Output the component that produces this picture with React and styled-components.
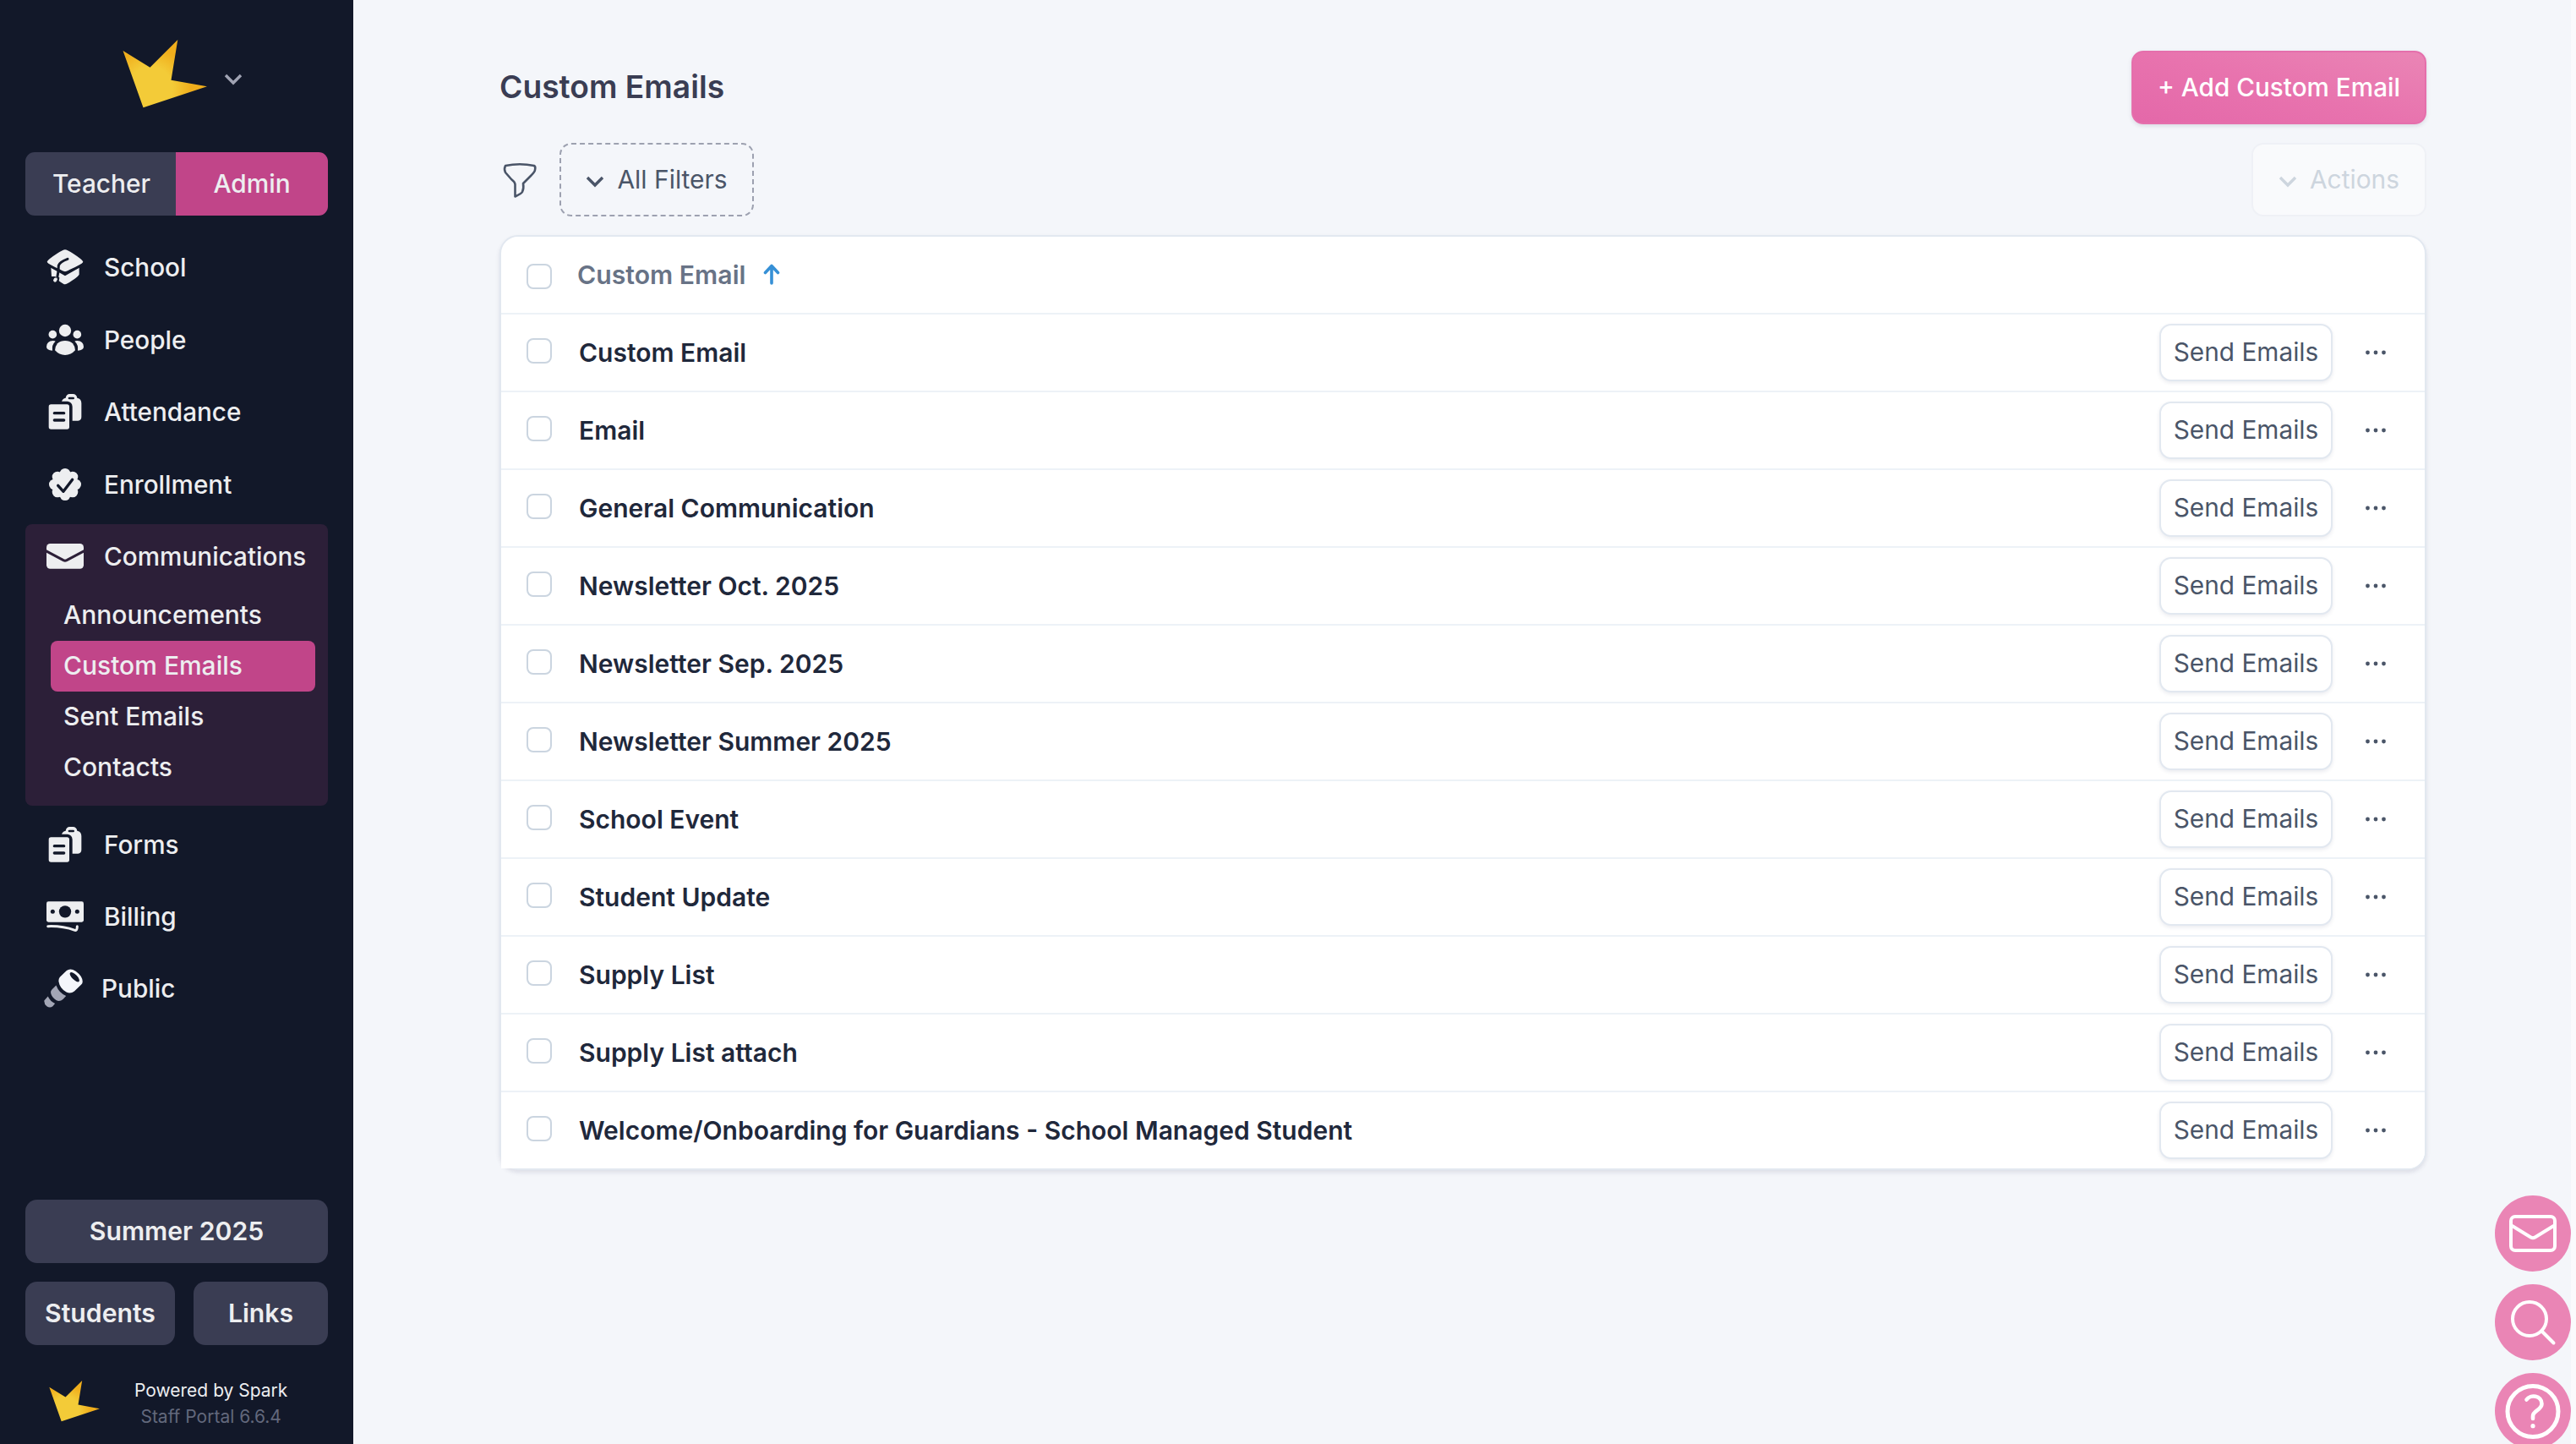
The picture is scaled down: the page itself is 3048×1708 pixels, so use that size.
import React from 'react';
import styled, { createGlobalStyle } from 'styled-components';

const colors = {
  sidebar: '#121829',
  slate: '#3a3d53',
  pink: '#c14589',
  group: '#2c1f38',
  light: '#edeef0',
  page: '#f4f6fa',
  border: '#e2e8f0',
  text: '#4a5568',
};

const GlobalStyle = createGlobalStyle`
  body {
    margin: 0;
    overflow: hidden;
    background: ${colors.page};
    font-family: Inter, sans-serif;
    font-size: 30px;
  }

  *, *::before, *::after {
    box-sizing: border-box;
  }

  button {
    font-family: inherit;
    font-size: inherit;
    padding: 0;
    border: none;
  }

  svg {
    display: block;
    flex-shrink: 0;
  }
`;

const Page = styled.div`
  display: flex;
  width: 3048px;
  height: 1708px;
`;

const Sidebar = styled.aside`
  display: flex;
  flex-direction: column;
  width: 418px;
  padding: 0 30px;
  background: ${colors.sidebar};
  color: ${colors.light};
`;

const Brand = styled.div`
  display: flex;
  align-items: flex-start;
  gap: 20px;
  height: 180px;
  padding: 47px 0 0 115px;

  svg + svg {
    margin-top: 40px;
  }
`;

const Toggle = styled.div`
  display: flex;
  height: 75px;
  border-radius: 11px;
  overflow: hidden;
`;

const ToggleItem = styled.button`
  width: ${(props) => (props.$active ? 180 : 178)}px;
  padding: ${(props) => (props.$active ? '0 0 2px' : '0 0 2px 2px')};
  background: ${(props) => (props.$active ? colors.pink : colors.slate)};
  color: ${colors.light};
  font-size: 29.8px;
  font-weight: 500;
`;

const Nav = styled.nav`
  margin-top: 18.5px;
  font-size: 29.7px;
`;

const NavItem = styled.a`
  display: flex;
  align-items: center;
  gap: ${(props) => props.$gap || 24}px;
  height: ${(props) => props.$height || 85.5}px;
  padding-left: 25px;
  font-weight: 500;
`;

const Group = styled.div`
  height: 333px;
  margin: 4.5px 0 3px;
  border-radius: 8px;
  background: ${colors.group};
`;

const SubList = styled.div`
  display: flex;
  flex-direction: column;
  padding: 2px 15px 15px 30px;
`;

const SubItem = styled.a`
  height: 60px;
  padding-left: 15px;
  border-radius: 8px;
  line-height: 58px;
  font-size: 30px;
  font-weight: 500;
  background: ${(props) => (props.$active ? colors.pink : 'transparent')};
`;

const PublicLabel = styled.span`
  margin-bottom: 2px;
`;

const Bottom = styled.div`
  display: flex;
  flex-wrap: wrap;
  justify-content: space-between;
  row-gap: 22px;
  margin-top: auto;
`;

const SideButton = styled.button`
  width: ${(props) => props.$width}px;
  height: 75px;
  padding-bottom: 1px;
  border-radius: 14px;
  background: ${colors.slate};
  color: ${colors.light};
  font-size: 30.2px;
  font-weight: 600;
`;

const Powered = styled.div`
  display: flex;
  gap: 41px;
  width: 100%;
  height: 95px;
  padding: 20px 0 0 28px;
`;

const PoweredText = styled.div`
  font-size: 21px;
  line-height: 31px;
  text-align: center;
  margin-top: -4px;
`;

const Version = styled.div`
  color: #62687c;
`;

const Main = styled.main`
  position: relative;
  flex: 1;
  padding: 60px 171px 0 173px;
  border-right: 6px solid #fafafc;
`;

const TitleBar = styled.header`
  display: flex;
  align-items: center;
  justify-content: space-between;
  height: 87px;
`;

const Title = styled.h1`
  margin: 0 0 3px;
  color: ${colors.slate};
  font-size: 37.2px;
  font-weight: 600;
`;

const AddButton = styled.button`
  width: 349px;
  height: 87px;
  padding-bottom: 2px;
  border: 2px solid #e56fac;
  border-radius: 14px;
  background: linear-gradient(15deg, #e468a9, #e873ae 50%, #ea85b5);
  box-shadow: 0 2px 5px rgba(60, 60, 90, 0.14);
  color: #fff;
  font-size: 29.7px;
  font-weight: 500;
`;

const FilterBar = styled.div`
  display: flex;
  align-items: center;
  height: 87px;
  margin: 22px 0;
`;

const DropButton = styled.button`
  display: flex;
  align-items: center;
  justify-content: center;
  gap: 15px;
  width: ${(props) => (props.$disabled ? 207 : 230)}px;
  height: 87px;
  margin-left: ${(props) => (props.$disabled ? 'auto' : '26px')};
  padding-bottom: 2px;
  border: 2px ${(props) => (props.$disabled ? 'solid #eff1f6' : 'dashed #9da1b0')};
  border-radius: 14px;
  background: ${(props) => (props.$disabled ? '#f9fafc' : 'transparent')};
  color: ${(props) => (props.$disabled ? '#cdd5de' : colors.text)};
  font-size: 29.9px;

  svg {
    margin-top: 7px;
  }
`;

const Table = styled.section`
  width: 2280px;
  height: 1106px;
  border: 2px solid ${colors.border};
  border-radius: 22px;
  background: #fff;
  box-shadow: 0 3px 5px rgba(60, 60, 100, 0.12);
`;

const Row = styled.div`
  display: flex;
  align-items: center;
  height: 92px;
  padding: 0 44px 0 30px;
  border-bottom: 2px solid #edf2f7;
  color: #1f283b;
  font-weight: 600;

  &:last-child {
    height: 90px;
    border-bottom: none;
    border-radius: 0 0 20px 0;
    background: #fff;
  }
`;

const HeadRow = styled(Row)`
  color: #687386;
  font-size: 30.2px;

  svg {
    margin-left: 21px;
  }
`;

const Checkbox = styled.span`
  width: 30px;
  height: 30px;
  margin: ${(props) => (props.$head ? '4px 30px 0 0' : '0 32px 4px 0')};
  border: 2px solid #cbd5e0;
  border-radius: 8px;
  background: #fff;
`;

const SendButton = styled.button`
  width: 205px;
  height: 68px;
  margin: 0 37px 0 auto;
  padding-bottom: 2px;
  border: 2px solid ${colors.border};
  border-radius: 14px;
  background: #fff;
  box-shadow: 0 2px 4px rgba(60, 70, 110, 0.1);
  color: ${colors.text};
  font-size: 29.8px;
`;

const FloatingActions = styled.div`
  position: absolute;
  top: 1414px;
  right: 0;
  display: flex;
  flex-direction: column;
  gap: 15px;
`;

const Fab = styled.button`
  width: 90px;
  height: 90px;
  border-radius: 50%;
  background: #ea85b5;
`;

const SparkLogo = ({ size = 100, id }) => (
  <svg width={size} height={size * 0.82} viewBox="0 0 100 82">
    <defs>
      <radialGradient id={id} gradientUnits="userSpaceOnUse" cx="33" cy="58" r="48">
        <stop offset="0.55" stopColor="#f3cb38" />
        <stop offset="1" stopColor="#f0ae1c" />
      </radialGradient>
    </defs>
    <path d="M0.5 13 32.5 32.7 65.3 0 57.5 47.7 100 55.3 24.5 80.3Z" fill={`url(#${id})`} />
  </svg>
);

const Chevron = ({ color = 'currentColor' }) => (
  <svg width="22" height="15" viewBox="0 0 22 15" fill="none" stroke={color} strokeWidth="3.4">
    <path d="m2 2 9 9 9-9" />
  </svg>
);

const NavSvg = ({ children }) => (
  <svg width="44" height="44" viewBox="0 0 132 132" fill={colors.light}>
    {children}
  </svg>
);

const SchoolIcon = () => (
  <NavSvg>
    <path d="M66 4Q73 4 96 19 127 39 130 47 127 54 97 71 72 88 66 88 60 88 35 71 5 54 2 47 5 39 36 19 59 4 66 4Z" />
    <path d="M16 68 66 97 116 68V92Q113 99 90 114 71 127 66 127 61 127 42 113L18 99Z" />
    <g fill="none" stroke={colors.sidebar} strokeLinecap="round">
      <path d="M4 57Q60 86 66 86 72 86 128 57" strokeWidth="9" />
      <path d="M75 37Q47 47 43 60 43 84 38 104" strokeWidth="9" />
      <path d="M40 120 43 104" strokeWidth="6" />
      <path d="M18 102 30 102" strokeWidth="6" />
    </g>
    <path d="M28 104h10l-1 10q-5 8-11 3-4-4 0-9z" />
  </NavSvg>
);

const PeopleIcon = () => (
  <NavSvg>
    <circle cx="66" cy="33" r="21.5" />
    <circle cx="22" cy="47" r="14.5" />
    <circle cx="109" cy="47" r="14.5" />
    <path d="M30 103Q30 90 39 79 50 69 66 69 82 69 93 79 102 90 102 103 87 120 66 120 45 120 30 103Z" />
    <path d="M32 71Q18 83 21 104 0 103 0 90 1 70 23 69 29 69 32 71Z" />
    <path d="M100 71Q114 83 111 104 132 103 132 90 131 70 109 69 103 69 100 71Z" />
  </NavSvg>
);

const PagesIcon = () => (
  <NavSvg>
    <path d="M54 29Q58 18 68 17 71 3 82 3H94Q106 3 109 17 124 20 124 36V84Q124 97 112 98H92V48Q91 31 75 29Z" />
    <rect x="8" y="40" width="73" height="88" rx="8" />
    <rect x="77" y="14" width="22" height="8" rx="4" fill={colors.sidebar} />
    <path d="M28 71h34M28 96h34" stroke={colors.sidebar} strokeWidth="10" strokeLinecap="round" />
  </NavSvg>
);

const BadgeIcon = () => (
  <NavSvg>
    <circle cx="66" cy="66" r="46" />
    {[0, 45, 90, 135, 180, 225, 270, 315].map((angle) => (
      <circle key={angle} cx="66" cy="28" r="19" transform={`rotate(${angle} 66 66)`} />
    ))}
    <path
      d="m41 70 19 21 32-42"
      fill="none"
      stroke={colors.sidebar}
      strokeWidth="10"
      strokeLinecap="round"
      strokeLinejoin="round"
    />
  </NavSvg>
);

const MailIcon = () => (
  <NavSvg>
    <rect y="21" width="132" height="89" rx="13" />
    <path d="M-4 46 60 80Q66 83 72 80L136 46" fill="none" stroke={colors.group} strokeWidth="9" />
  </NavSvg>
);

const BillingIcon = () => (
  <NavSvg>
    <rect y="13" width="132" height="73" rx="7" />
    <g fill={colors.sidebar}>
      <circle cx="66" cy="49" r="21.5" />
      <circle cx="22" cy="49" r="7.5" />
      <circle cx="109" cy="49" r="7.5" />
    </g>
    <path
      d="M5 101Q56 99 101 115 109 117 109 101"
      fill="none"
      stroke={colors.light}
      strokeWidth="9"
      strokeLinecap="round"
    />
  </NavSvg>
);

const FlashlightSvg = styled.svg`
  margin: 0 0 2px -3px;
`;

const FlashlightIcon = () => (
  <FlashlightSvg width="46" height="46" viewBox="-1 -1 137 137">
    <path
      d="M55 28 79 5Q92-5 111 7 134 24 135 42 136 50 130 55L106 78Q93 88 78 81 55 69 51 44 50 34 55 28Z"
      fill="#f4f6fb"
    />
    <ellipse cx="107" cy="28" rx="22" ry="9" fill={colors.sidebar} transform="rotate(45 107 28)" />
    <path d="M42 57Q52 84 77 94L66 106Q54 116 42 109 27 101 23 84 22 77 27 72Z" fill="#a3a6b5" />
    <path d="M13 96Q22 115 38 121L30 131Q20 138 9 131-1 123 0 111Z" fill="#a3a6b5" />
  </FlashlightSvg>
);

const FunnelIcon = () => (
  <svg
    width="45"
    height="44"
    viewBox="0 0 45 44"
    fill="none"
    stroke={colors.text}
    strokeWidth="2.6"
    strokeLinejoin="round"
  >
    <path d="M7 5Q24 1.500 41 5 43 6 42 10 42 12 37 17L28 26Q29 32 27 36 26 38 18.500 41.500V27Q18 24 14 21L7 13Q5 9 7 5Z" />
  </svg>
);

const SortArrow = () => (
  <svg width="20" height="26" viewBox="0 0 20 26" fill="none" stroke="#3690d6" strokeWidth="3.6" strokeLinecap="round">
    <path d="M10 3v20M2.500 10.500 10 2.500l7.500 8" strokeLinejoin="round" />
  </svg>
);

const Dots = () => (
  <svg width="28" height="8" viewBox="0 0 28 8" fill={colors.text}>
    <circle cx="4.500" cy="4" r="2.400" />
    <circle cx="14" cy="4" r="2.400" />
    <circle cx="23.500" cy="4" r="2.400" />
  </svg>
);

const FabSvg = ({ children }) => (
  <svg
    width="90"
    height="90"
    viewBox="0 0 90 90"
    fill="none"
    stroke="#fff"
    strokeWidth="4"
    strokeLinecap="round"
    strokeLinejoin="round"
  >
    {children}
  </svg>
);

const emails = [
  'Custom Email',
  'Email',
  'General Communication',
  'Newsletter Oct. 2025',
  'Newsletter Sep. 2025',
  'Newsletter Summer 2025',
  'School Event',
  'Student Update',
  'Supply List',
  'Supply List attach',
  'Welcome/Onboarding for Guardians - School Managed Student',
];

const App = () => (
  <>
    <GlobalStyle />
    <Page>
      <Sidebar>
        <Brand>
          <SparkLogo id="spark-top" />
          <Chevron color="#a0a3b3" />
        </Brand>
        <Toggle>
          <ToggleItem>Teacher</ToggleItem>
          <ToggleItem $active>Admin</ToggleItem>
        </Toggle>
        <Nav>
          <NavItem><SchoolIcon />School</NavItem>
          <NavItem><PeopleIcon />People</NavItem>
          <NavItem><PagesIcon />Attendance</NavItem>
          <NavItem><BadgeIcon />Enrollment</NavItem>
          <Group>
            <NavItem $height={76}><MailIcon />Communications</NavItem>
            <SubList>
              <SubItem>Announcements</SubItem>
              <SubItem $active>Custom Emails</SubItem>
              <SubItem>Sent Emails</SubItem>
              <SubItem>Contacts</SubItem>
            </SubList>
          </Group>
          <NavItem><PagesIcon />Forms</NavItem>
          <NavItem><BillingIcon />Billing</NavItem>
          <NavItem $gap={22}><FlashlightIcon /><PublicLabel>Public</PublicLabel></NavItem>
        </Nav>
        <Bottom>
          <SideButton $width={358}>Summer 2025</SideButton>
          <SideButton $width={177}>Students</SideButton>
          <SideButton $width={159}>Links</SideButton>
          <Powered>
            <SparkLogo id="spark-bottom" size={60} />
            <PoweredText>
              Powered by Spark
              <Version>Staff Portal 6.6.4</Version>
            </PoweredText>
          </Powered>
        </Bottom>
      </Sidebar>
      <Main>
        <TitleBar>
          <Title>Custom Emails</Title>
          <AddButton>+ Add Custom Email</AddButton>
        </TitleBar>
        <FilterBar>
          <FunnelIcon />
          <DropButton><Chevron />All Filters</DropButton>
          <DropButton $disabled><Chevron />Actions</DropButton>
        </FilterBar>
        <Table>
          <HeadRow>
            <Checkbox $head />
            <span>Custom Email</span>
            <SortArrow />
          </HeadRow>
          {emails.map((email) => (
            <Row key={email}>
              <Checkbox />
              <span>{email}</span>
              <SendButton>Send Emails</SendButton>
              <Dots />
            </Row>
          ))}
        </Table>
        <FloatingActions>
          <Fab>
            <FabSvg>
              <rect x="19" y="25" width="52" height="40" rx="5" />
              <path d="m20.500 36 22 13.500q2.500 1.500 5 0l22-13.500" />
            </FabSvg>
          </Fab>
          <Fab>
            <FabSvg>
              <circle cx="41" cy="41" r="20" />
              <path d="m55.500 55.500 14 14" />
            </FabSvg>
          </Fab>
          <Fab>
            <FabSvg>
              <circle cx="45" cy="45.500" r="30" strokeWidth="5" />
              <path d="M37.500 31.500C42 25 55.500 26.500 55.500 36.500 55.500 44 45 44 45 51V54" strokeWidth="4.600" />
              <circle cx="45" cy="62.700" r="2.600" fill="#fff" stroke="none" />
            </FabSvg>
          </Fab>
        </FloatingActions>
      </Main>
    </Page>
  </>
);

export default App;
